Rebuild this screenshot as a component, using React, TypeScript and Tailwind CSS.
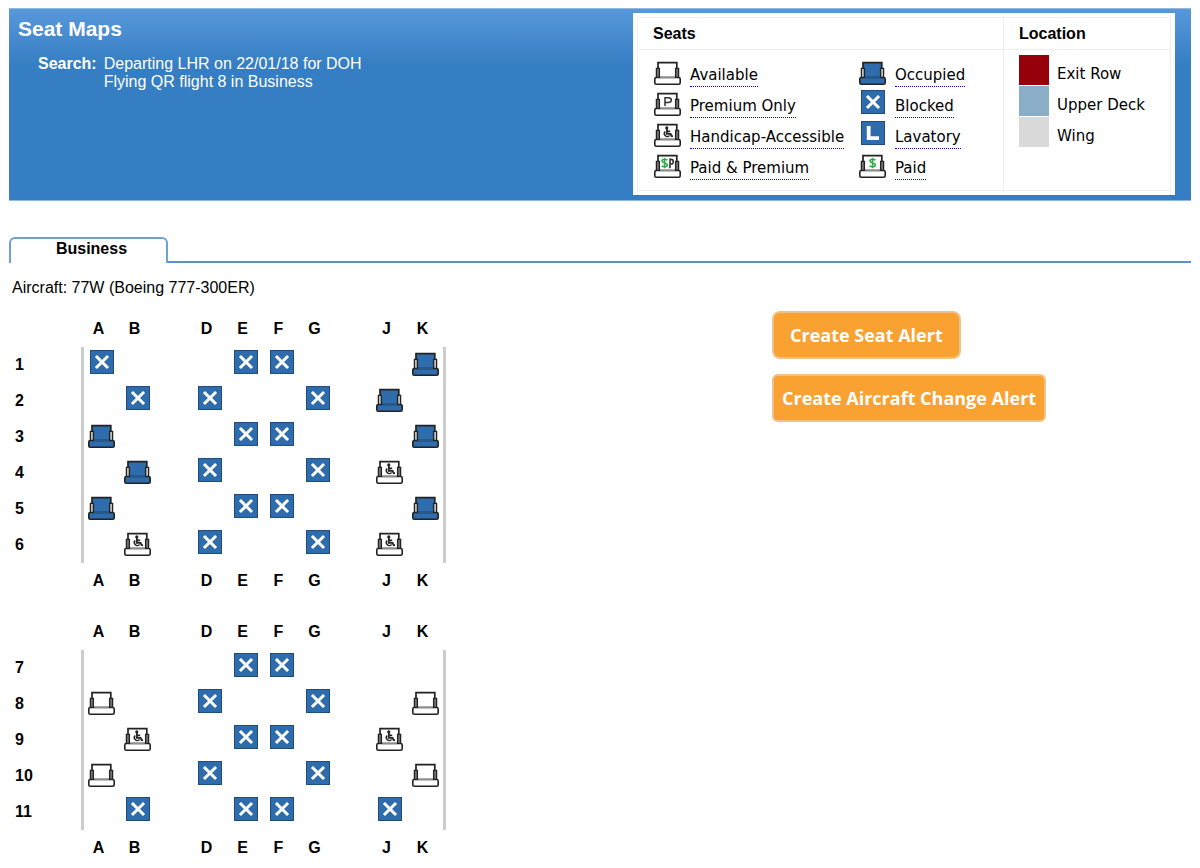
import type { ReactNode } from 'react';

type SeatKind =
  | 'available'
  | 'premium'
  | 'handicap'
  | 'paidPremium'
  | 'occupied'
  | 'blocked'
  | 'lavatory'
  | 'paid';

type SeatRow = {
  number: number;
  seats: Record<string, SeatKind>;
};

// null is an aisle
const columns = ['A', 'B', null, 'D', 'E', 'F', 'G', null, 'J', 'K'];

const sections: SeatRow[][] = [
  [
    { number: 1, seats: { A: 'blocked', E: 'blocked', F: 'blocked', K: 'occupied' } },
    { number: 2, seats: { B: 'blocked', D: 'blocked', G: 'blocked', J: 'occupied' } },
    { number: 3, seats: { A: 'occupied', E: 'blocked', F: 'blocked', K: 'occupied' } },
    { number: 4, seats: { B: 'occupied', D: 'blocked', G: 'blocked', J: 'handicap' } },
    { number: 5, seats: { A: 'occupied', E: 'blocked', F: 'blocked', K: 'occupied' } },
    { number: 6, seats: { B: 'handicap', D: 'blocked', G: 'blocked', J: 'handicap' } },
  ],
  [
    { number: 7, seats: { E: 'blocked', F: 'blocked' } },
    { number: 8, seats: { A: 'available', D: 'blocked', G: 'blocked', K: 'available' } },
    { number: 9, seats: { B: 'handicap', E: 'blocked', F: 'blocked', J: 'handicap' } },
    { number: 10, seats: { A: 'available', D: 'blocked', G: 'blocked', K: 'available' } },
    { number: 11, seats: { B: 'blocked', E: 'blocked', F: 'blocked', J: 'blocked' } },
  ],
];

const seatLegend: { kind: SeatKind; label: string }[] = [
  { kind: 'available', label: 'Available' },
  { kind: 'occupied', label: 'Occupied' },
  { kind: 'premium', label: 'Premium Only' },
  { kind: 'blocked', label: 'Blocked' },
  { kind: 'handicap', label: 'Handicap-Accessible' },
  { kind: 'lavatory', label: 'Lavatory' },
  { kind: 'paidPremium', label: 'Paid & Premium' },
  { kind: 'paid', label: 'Paid' },
];

const locationLegend = [
  { color: 'bg-[#96000b]', label: 'Exit Row' },
  { color: 'bg-[#8aadc8]', label: 'Upper Deck' },
  { color: 'bg-[#d9d9d9]', label: 'Wing' },
];

function Square({ children }: { children: ReactNode }) {
  return (
    <>
      <rect x="2.5" y="3.5" width="23" height="23" fill="#2f6cab" stroke="#1f4c7c" />
      {children}
    </>
  );
}

function Chair({ filled, children }: { filled?: boolean; children?: ReactNode }) {
  const fill = filled ? '#2f6cab' : '#ffffff';
  const arm = filled ? '#c9c9c9' : '#777777';
  return (
    <>
      <path d="M4 23V6.6H22.8V23Z" fill={fill} stroke="#222222" strokeWidth="1.7" />
      <path d="M2.4 22.5V12.3H5.4V21.5" fill={arm} stroke="#222222" strokeWidth="1.3" />
      <path d="M24.6 22.5V12.3H21.6V21.5" fill={arm} stroke="#222222" strokeWidth="1.3" />
      <rect x="0.8" y="21.5" width="25.4" height="6.7" rx="1.5" fill={fill} stroke="#222222" strokeWidth="1.6" />
      {filled ? (
        <path d="M6 21.5H21" stroke="#24598f" strokeWidth="1.6" />
      ) : (
        <path d="M6.2 21.3H20.8" stroke="#8c8c8c" strokeWidth="1.6" />
      )}
      {children}
    </>
  );
}

function Dollar({ x }: { x: number }) {
  return (
    <path
      d={`M${x + 2.8} 11.2C${x + 1.5} 9.9 ${x - 2.6} 9.7 ${x - 2.6} 12.1C${x - 2.6} 14.3 ${x + 2.8} 13.5 ${x + 2.8} 15.9C${x + 2.8} 18.2 ${x - 1.8} 18 ${x - 3} 16.7M${x} 8.9V19.2`}
      fill="none"
      stroke="#2fae48"
      strokeWidth="1.6"
    />
  );
}

function SeatIcon({ kind }: { kind: SeatKind }) {
  return (
    <svg width="28" height="32" viewBox="0 0 28 32" className="block shrink-0" role="img" aria-label={kind}>
      {kind === 'available' && <Chair />}
      {kind === 'occupied' && <Chair filled />}
      {kind === 'premium' && (
        <Chair>
          <path d="M11 19V10.7H14.3Q17.3 10.7 17.3 13.1T14.3 15.5H11" fill="none" stroke="#333333" strokeWidth="1.5" />
        </Chair>
      )}
      {kind === 'handicap' && (
        <Chair>
          <circle cx="12.8" cy="9.9" r="1.6" fill="#222222" />
          <path d="M12.9 11V15.8H16.6L17.6 18.2H19M13.1 13.4H16.2" fill="none" stroke="#222222" strokeWidth="1.7" />
          <path d="M11.2 13.6A2.9 2.9 0 1 0 15.6 17.6" fill="none" stroke="#222222" strokeWidth="1.5" />
        </Chair>
      )}
      {kind === 'paidPremium' && (
        <Chair>
          <Dollar x={10.6} />
          <path d="M16 19.2V10.4H17.2Q19.3 10.4 19.3 12.7T17.2 15H16" fill="none" stroke="#333333" strokeWidth="1.6" />
        </Chair>
      )}
      {kind === 'paid' && (
        <Chair>
          <Dollar x={13.6} />
        </Chair>
      )}
      {kind === 'blocked' && (
        <Square>
          <path d="M9 10L19 20M19 10L9 20" stroke="#ffffff" strokeWidth="3" strokeLinecap="square" />
        </Square>
      )}
      {kind === 'lavatory' && (
        <Square>
          <path d="M9.7 8V20.2H20" fill="none" stroke="#ffffff" strokeWidth="3.8" />
        </Square>
      )}
    </svg>
  );
}

function Legend() {
  return (
    <div className="mt-1 mr-4 mb-[5px] bg-white p-1 text-black">
      <div className="flex border border-[#eeeeee]">
        <section className="w-[366px] border-r border-[#eeeeee]">
          <h2 className="h-8 border-b border-[#eeeeee] pl-[15px] text-base leading-8 font-bold">Seats</h2>
          <ul className="grid grid-cols-[205px_1fr] auto-rows-[31px] pt-1.5 pb-2.5 pl-4 font-['DejaVu_Sans',sans-serif] text-[15px]">
            {seatLegend.map((item) => (
              <li key={item.kind} className="flex gap-2">
                <SeatIcon kind={item.kind} />
                <a href="#" className="self-end border-b border-dotted border-[#0000ff] leading-[22px]">
                  {item.label}
                </a>
              </li>
            ))}
          </ul>
        </section>
        <section className="w-[166px]">
          <h2 className="h-8 border-b border-[#eeeeee] pl-[15px] text-base leading-8 font-bold">Location</h2>
          <ul className="pt-[5px] pl-[15px] font-['DejaVu_Sans',sans-serif] text-[15px]">
            {locationLegend.map((item) => (
              <li key={item.label} className="mb-px flex h-[30px] items-end gap-2">
                <span className={`size-[30px] ${item.color}`} />
                <span className="leading-[22px]">{item.label}</span>
              </li>
            ))}
          </ul>
        </section>
      </div>
    </div>
  );
}

function ColumnLetters() {
  return (
    <tr className="h-9">
      <td />
      {columns.map((letter, i) =>
        letter ? (
          <th key={i} scope="col" className="p-0 pr-px font-bold">
            {letter}
          </th>
        ) : (
          <td key={i} />
        )
      )}
      <td />
    </tr>
  );
}

function SeatTable({ rows }: { rows: SeatRow[] }) {
  return (
    <table className="w-[435px] table-fixed border-separate border-spacing-0 text-base">
      <colgroup>
        <col className="w-[70px]" />
        {columns.map((_, i) => (
          <col key={i} className="w-9" />
        ))}
        <col className="w-[5px]" />
      </colgroup>
      <thead>
        <ColumnLetters />
      </thead>
      <tbody>
        {rows.map((row) => (
          <tr key={row.number} className="h-9">
            <th scope="row" className="p-0 pl-1 text-left font-bold">
              {row.number}
            </th>
            {columns.map((letter, i) => (
              <td
                key={i}
                className={i === 0 ? 'border-l-3 border-[#cccccc] p-0 pl-1 align-top' : 'p-0 pl-[7px] align-top'}
              >
                {letter && row.seats[letter] && <SeatIcon kind={row.seats[letter]} />}
              </td>
            ))}
            <td className="border-r-3 border-[#cccccc] p-0" />
          </tr>
        ))}
      </tbody>
      <tfoot>
        <ColumnLetters />
      </tfoot>
    </table>
  );
}

export default function App() {
  return (
    <div className="bg-white px-[9px] pt-2 font-['Liberation_Sans',Arial,sans-serif] text-base text-black">
      <header className="flex items-start justify-between border-y border-[#8fb9e2] bg-[#357ec3] bg-linear-to-b from-[#5898db] from-0% via-[#357ec3] via-[56px] to-[#357ec3] text-white">
        <div className="pt-1.5 pl-[9px]">
          <h1 className="text-[21px] leading-7 font-bold">Seat Maps</h1>
          <dl className="mt-3 ml-5 flex gap-[7px] leading-[18px]">
            <dt className="font-bold">Search:</dt>
            <dd>
              Departing LHR on 22/01/18 for DOH
              <br />
              Flying QR flight 8 in Business
            </dd>
          </dl>
        </div>
        <Legend />
      </header>

      <nav className="mt-9 flex">
        <button
          type="button"
          className="h-[26px] w-[159px] rounded-t-md border-2 border-b-0 border-[#6ba1d3] pb-1 pl-1.5 text-base leading-5 font-bold"
        >
          Business
        </button>
        <div className="flex-1 border-b-2 border-[#5b93c6]" />
      </nav>

      <main>
        <p className="mt-[13px] pl-[3px] leading-6">Aircraft: 77W (Boeing 777-300ER)</p>
        <div className="mt-[11px] grid grid-cols-[763fr_419fr]">
          <div className="flex flex-col gap-[15px] pl-0.5">
            {sections.map((rows) => (
              <SeatTable key={rows[0].number} rows={rows} />
            ))}
          </div>
          <div className="flex flex-col items-start gap-[15px] font-['Open_Sans','Noto_Sans',sans-serif] text-lg font-bold text-white">
            <button type="button" className="h-12 rounded-lg border-2 border-[#f1c287] bg-[#f9a131] px-4">
              Create Seat Alert
            </button>
            <button type="button" className="h-12 rounded-md border-2 border-[#f1c287] bg-[#f9a131] px-2">
              Create Aircraft Change Alert
            </button>
          </div>
        </div>
      </main>
    </div>
  );
}
